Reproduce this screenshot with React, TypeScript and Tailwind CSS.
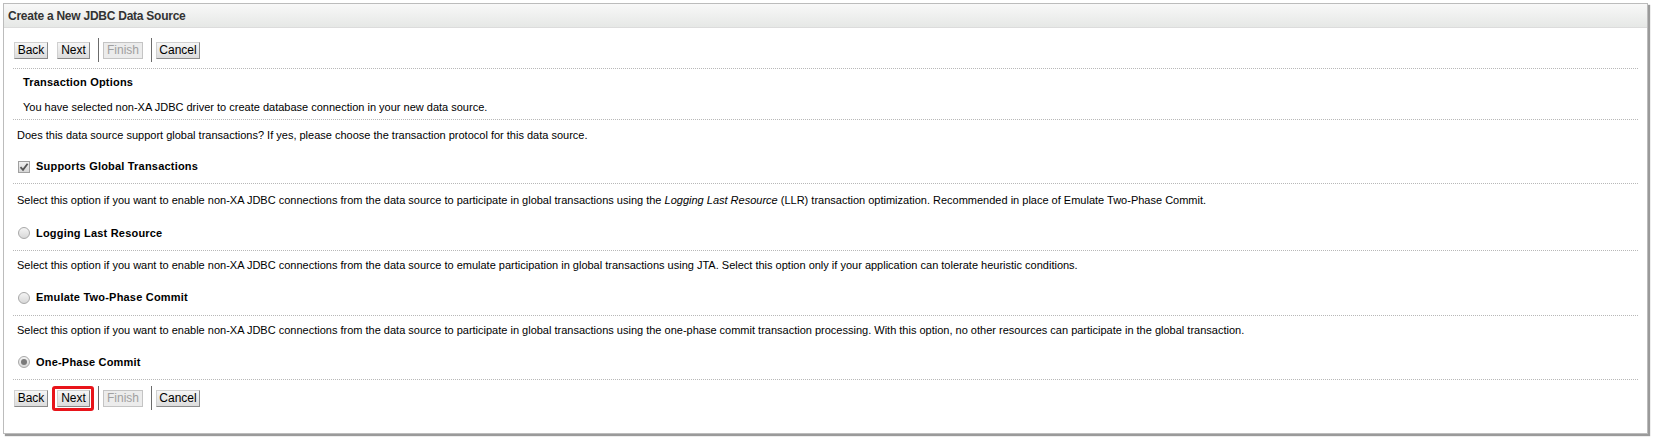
import React from "react";

const textFont = { fontFamily: '"Liberation Sans", Arial, sans-serif' };

function Btn({ label, disabled, w }: { label: string; disabled?: boolean; w: string }) {
  return (
    <button
      className={
        "h-[17px] flex items-center justify-center text-[12px] leading-none border " +
        w +
        " " +
        (disabled
          ? "text-[#a0a0a0] bg-[#ececec] border-[#c4c4c4]"
          : "text-black bg-gradient-to-b from-[#f6f6f6] to-[#dcdcdc] border-t-[#d0d0d0] border-l-[#d0d0d0] border-r-[#8a8a8a] border-b-[#8a8a8a]")
      }
      style={textFont}
    >
      {label}
    </button>
  );
}

function Sep() {
  return <div className="w-px h-[24px] bg-[#6b6b6b]" />;
}

function ButtonRow({ highlight }: { highlight?: boolean }) {
  return (
    <div className="flex items-center h-[24px] ml-px">
      <Btn label="Back" w="w-[34px]" />
      <div className="relative ml-[9px]">
        <Btn label="Next" w="w-[33px]" />
        {highlight && (
          <div className="absolute left-[-5px] top-[-4px] w-[42px] h-[25px] border-[3px] border-[#e8141a] rounded-[3px]" />
        )}
      </div>
      <div className="ml-[8px]">
        <Sep />
      </div>
      <div className="ml-[4px]">
        <Btn label="Finish" w="w-[40px]" disabled />
      </div>
      <div className="ml-[8px]">
        <Sep />
      </div>
      <div className="ml-[4px]">
        <Btn label="Cancel" w="w-[44px]" />
      </div>
    </div>
  );
}

function Dotted() {
  return <div className="h-px border-t border-dotted border-[#b8b8b8]" />;
}

function Radio({ checked }: { checked?: boolean }) {
  return (
    <div className="w-[12px] h-[12px] rounded-full border border-[#a8a8a8] bg-gradient-to-b from-[#f4f4f4] to-[#d8d8d8] flex items-center justify-center">
      {checked && <div className="w-[6px] h-[6px] rounded-full bg-[#7a7a7a]" />}
    </div>
  );
}

function Checkbox() {
  return (
    <div className="w-[12px] h-[12px] border border-[#a0a0a0] bg-gradient-to-b from-[#f0f0f0] to-[#d6d6d6] flex items-center justify-center">
      <svg width="10" height="10" viewBox="0 0 10 10">
        <path d="M1.5 5.2 L4 7.8 L8.6 1.8" stroke="#555" strokeWidth="1.8" fill="none" />
      </svg>
    </div>
  );
}

export default function App() {
  return (
    <div className="w-[1653px] h-[441px] bg-white pt-[3px] pl-[3px]" style={textFont}>
      <div className="w-[1645px] h-[431px] border border-[#bcbcbc] bg-white shadow-[2px_2px_1px_#9a9a9a] flex flex-col">
        <div className="h-[24px] bg-gradient-to-b from-[#f8f8f8] to-[#e6e8e6] border-b border-[#dcdcdc] flex items-center pl-[4px]">
          <span className="text-[12px] font-bold text-[#333] tracking-[-0.25px]">Create a New JDBC Data Source</span>
        </div>
        <div className="flex flex-col pl-[9px] pr-[9px] text-[11px] text-black">
          <div className="mt-[10px]">
            <ButtonRow />
          </div>
          <div className="mt-[6px]">
            <Dotted />
          </div>
          <div className="h-[26px] flex items-center pl-[10px] font-bold tracking-[0.2px]">Transaction Options</div>
          <div className="h-[24px] flex items-center pl-[10px]">
            You have selected non-XA JDBC driver to create database connection in your new data source.
          </div>
          <Dotted />
          <div className="h-[30px] flex items-center pl-[4px]">
            Does this data source support global transactions? If yes, please choose the transaction protocol for this data source.
          </div>
          <div className="h-[33px] flex items-center pl-[5px] gap-[6px] font-bold tracking-[0.2px]">
            <Checkbox />
            <span>Supports Global Transactions</span>
          </div>
          <Dotted />
          <div className="h-[32px] flex items-center pl-[4px]">
            <span>
              Select this option if you want to enable non-XA JDBC connections from the data source to participate in global transactions using the{" "}
              <i>Logging Last Resource</i> (LLR) transaction optimization. Recommended in place of Emulate Two-Phase Commit.
            </span>
          </div>
          <div className="h-[34px] flex items-center pl-[5px] gap-[6px] font-bold tracking-[0.2px]">
            <Radio />
            <span>Logging Last Resource</span>
          </div>
          <Dotted />
          <div className="h-[29px] flex items-center pl-[4px]">
            Select this option if you want to enable non-XA JDBC connections from the data source to emulate participation in global transactions using JTA. Select this option only if your application can tolerate heuristic conditions.
          </div>
          <div className="h-[35px] flex items-center pl-[5px] gap-[6px] font-bold tracking-[0.2px]">
            <Radio />
            <span>Emulate Two-Phase Commit</span>
          </div>
          <Dotted />
          <div className="h-[29px] flex items-center pl-[4px]">
            Select this option if you want to enable non-XA JDBC connections from the data source to participate in global transactions using the one-phase commit transaction processing. With this option, no other resources can participate in the global transaction.
          </div>
          <div className="h-[34px] flex items-center pl-[5px] gap-[6px] font-bold tracking-[0.2px]">
            <Radio checked />
            <span>One-Phase Commit</span>
          </div>
          <Dotted />
          <div className="mt-[6px]">
            <ButtonRow highlight />
          </div>
        </div>
      </div>
    </div>
  );
}
